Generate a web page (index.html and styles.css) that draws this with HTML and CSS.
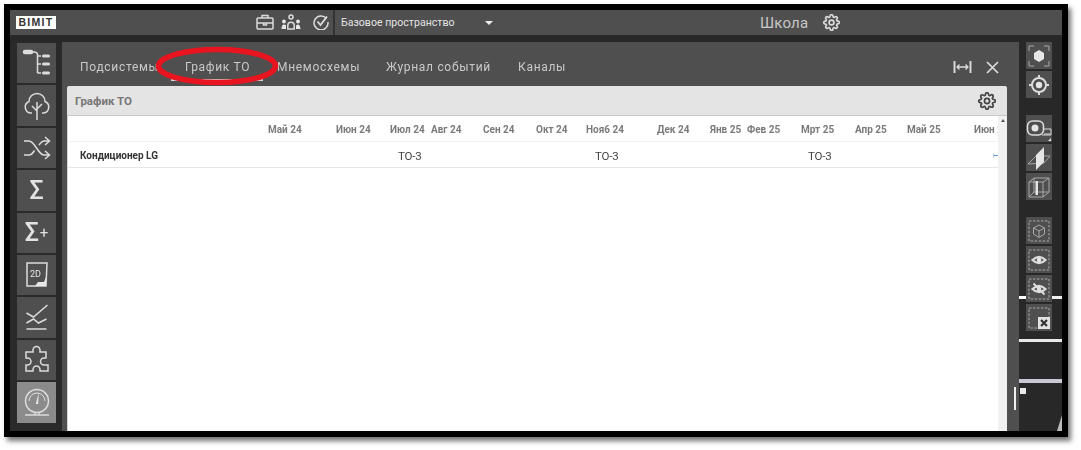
FILE: index.html
```html
<!DOCTYPE html>
<html lang="ru">
<head>
<meta charset="utf-8">
<title>График ТО</title>
<link rel="stylesheet" href="styles.css">
</head>
<body>
<svg class="defs" width="0" height="0" aria-hidden="true">
  <symbol id="gear" viewBox="0 0 24 24">
    <circle cx="12" cy="12" r="3.4"/>
    <path d="M19.4 15a1.65 1.65 0 0 0 .33 1.82l.06.06a2 2 0 0 1 0 2.83 2 2 0 0 1-2.83 0l-.06-.06a1.65 1.65 0 0 0-1.82-.33 1.65 1.65 0 0 0-1 1.51V21a2 2 0 0 1-2 2 2 2 0 0 1-2-2v-.09A1.65 1.65 0 0 0 9 19.4a1.65 1.65 0 0 0-1.82.33l-.06.06a2 2 0 0 1-2.83 0 2 2 0 0 1 0-2.83l.06-.06a1.65 1.65 0 0 0 .33-1.82 1.65 1.65 0 0 0-1.51-1H3a2 2 0 0 1-2-2 2 2 0 0 1 2-2h.09A1.65 1.65 0 0 0 4.6 9a1.65 1.65 0 0 0-.33-1.82l-.06-.06a2 2 0 0 1 0-2.83 2 2 0 0 1 2.83 0l.06.06a1.65 1.65 0 0 0 1.82.33H9a1.65 1.65 0 0 0 1-1.51V3a2 2 0 0 1 2-2 2 2 0 0 1 2 2v.09a1.65 1.65 0 0 0 1 1.51 1.65 1.65 0 0 0 1.82-.33l.06-.06a2 2 0 0 1 2.83 0 2 2 0 0 1 0 2.83l-.06.06a1.65 1.65 0 0 0-.33 1.82V9a1.65 1.65 0 0 0 1.51 1H21a2 2 0 0 1 2 2 2 2 0 0 1-2 2h-.09a1.65 1.65 0 0 0-1.51 1z"/>
  </symbol>
</svg>
<div class="frame">
  <header class="topbar">
    <div class="logo">BIMIT</div>
    <div class="top-icons">
      <svg class="ico" width="18" height="16" viewBox="0 0 18 16"><rect x="1" y="4" width="16" height="11" rx="1"/><path d="M6 4V1.500h6V4M1 9h16M7.500 9v2h3V9"/></svg>
      <svg class="ico" width="20" height="16" viewBox="0 0 20 16"><circle cx="10" cy="3" r="2"/><path d="M6.800 15v-3.500a3.200 3.200 0 0 1 6.400 0V15z"/><circle class="solid" cx="3" cy="7.500" r="1.900"/><circle class="solid" cx="17" cy="7.500" r="1.900"/><path class="solid" d="M.5 15q0-4.500 2.500-4.500t2 1.500v3zM15 15v-3q0-1.500 2-1.500t2.500 4.500z"/></svg>
      <svg class="ico ico-check" width="16" height="16" viewBox="0 0 16 16"><path d="M13.500 4.500A7 7 0 1 0 15 8"/><path d="M4.500 7.500 7.500 11 14 2.500" stroke-width="1.800"/></svg>
    </div>
    <div class="space">
      <span>Базовое пространство</span>
      <i class="caret"></i>
    </div>
    <div class="project">
      <span>Школа</span>
      <svg class="ico gear" width="17" height="17"><use href="#gear"/></svg>
    </div>
  </header>
  <div class="workspace">
    <nav class="rail">
      <button class="rbtn"><svg class="ico ico2" width="30" height="30" viewBox="0 0 30 30"><path d="M9 4h3c2.500 0 3.500 1 3.500 3v18M15.500 8H19M15.500 16H19M15.500 25H19"/><path class="pill" d="M3 4h6"/><path class="thick" d="M21.500 8h5M21.500 16h5M21.500 25h5"/></svg></button>
      <button class="rbtn"><svg class="ico ico2" width="30" height="30" viewBox="0 0 30 30"><path d="M10 22H8.500a6 6 0 0 1-1.500-11.500 8 8 0 0 1 16 0A6 6 0 0 1 21.500 22H20M15 29V11M15 20l-5-5M15 18l5-5"/></svg></button>
      <button class="rbtn"><svg class="ico ico2" width="30" height="30" viewBox="0 0 30 30"><path d="M2 8h5c6 0 9 14 15 14h5M2 22h5c2.500 0 4-2 5.500-4.500M17 12c1.500-2 3-4 5-4h5M23 4l4.500 4L23 12M23 18l4.500 4L23 26"/></svg></button>
      <button class="rbtn"><span class="sigma">Σ</span></button>
      <button class="rbtn"><span class="sigma">Σ<small>+</small></span></button>
      <button class="rbtn"><svg class="ico ico2" width="30" height="30" viewBox="0 0 30 30"><path d="M5 3h20l-1 23H5z"/><path class="solid" d="M13 26l3-4h6l2-5v9z"/><text x="8" y="17" class="ico-text">2D</text></svg></button>
      <button class="rbtn"><svg class="ico ico2" width="30" height="30" viewBox="0 0 30 30"><path d="M4.500 10l7 4 14-12M4.500 20l7-4 5 4 8-4M4.500 26h20"/></svg></button>
      <button class="rbtn"><svg class="ico ico2" width="30" height="30" viewBox="0 0 30 30"><path d="M11 7V5a3.500 3.500 0 0 1 7 0v2h6v6h-2a3.500 3.500 0 0 0 0 7h4v6h-8v-1.500a3.500 3.500 0 0 0-7 0V26H4v-6h1.500a3.500 3.500 0 0 0 0-7H4V7z"/></svg></button>
      <button class="rbtn active"><svg class="ico ico2" width="32" height="32" viewBox="0 0 32 32"><circle cx="16" cy="15" r="11.500"/><path class="thin" d="M8 15a8 8 0 0 1 16 0"/><path class="solid" d="M14.800 18l2.800-11-.400 11z"/><path d="M14 26.500v2M18 26.500v2M4 29h24"/></svg></button>
    </nav>

    <main class="panel">
      <div class="tabs">
        <a class="tab t1">Подсистемы</a>
        <a class="tab t2">График ТО</a>
        <a class="tab t3">Мнемосхемы</a>
        <a class="tab t4">Журнал событий</a>
        <a class="tab t5">Каналы</a>
        <div class="tab-tools">
          <svg class="ico" width="19" height="12" viewBox="0 0 19 12"><path d="M1.500 0v12M17.500 0v12" stroke-width="1.900"/><path stroke-width="1.300" d="M4 6h11M6.500 3.500 4 6l2.500 2.500M12.500 3.500 15 6l-2.500 2.500"/></svg>
          <svg class="ico close" width="13" height="13" viewBox="0 0 13 13"><path d="M1 1l11 11M12 1 1 12"/></svg>
        </div>
      </div>
      <div class="card-wrap">
        <section class="card">
          <div class="card-head">
            <span>График ТО</span>
            <svg class="ico gear gear-dark" width="18" height="18"><use href="#gear"/></svg>
          </div>
          <div class="card-body">
            <div class="table">
              <div class="gantt gantt-head">
                <span></span><span>Май 24</span><span>Июн 24</span><span>Июл 24</span><span>Авг 24</span><span>Сен 24</span><span>Окт 24</span><span>Ноя6 24</span><span>Дек 24</span><span>Янв 25</span><span>Фев 25</span><span>Мрт 25</span><span>Апр 25</span><span>Май 25</span><span>Июн 25</span>
              </div>
              <div class="gantt gantt-row">
                <b>Кондиционер LG</b><span></span><span></span><span class="to">ТО-3</span><span></span><span></span><span></span><span class="to to-b">ТО-3</span><span></span><span></span><span></span><span class="to to-c">ТО-3</span><span></span><span></span><span class="tick">⊢</span>
              </div>
            </div>
            <div class="scrollbar"><i class="up"></i></div>
          </div>
        </section>
        <div class="strip"></div>
      </div>
      <svg class="ring" width="124" height="40" viewBox="0 0 124 40"><ellipse cx="62" cy="20" rx="58.500" ry="16.500"/></svg>
    </main>

    <aside class="tools">
      <div class="group">
        <button class="tbtn"><svg class="ico" width="24" height="24" viewBox="0 0 24 24"><path class="faint" d="M2 7V2h5M17 2h5v5M22 17v5h-5M7 22H2v-5"/><path class="solid" d="M12 6l5 3v6l-5 3-5-3V9z"/></svg></button>
        <button class="tbtn"><svg class="ico" width="22" height="22" viewBox="0 0 22 22"><circle cx="11" cy="11" r="7" stroke-width="2"/><circle class="solid" cx="11" cy="11" r="3.200"/><path d="M11 1v3M11 18v3M1 11h3M18 11h3" stroke-width="2"/></svg></button>
      </div>
      <div class="group">
        <button class="tbtn"><svg class="ico" width="26" height="26" viewBox="0 0 26 26"><rect x="1.500" y="5" width="16" height="14" rx="5" stroke-width="1.600"/><circle class="solid" cx="9" cy="12" r="3.500"/><path d="M16 19h9v-6h-7M19 19v-2M21 19v-2M23 19v-2" class="thin"/><path class="solid" d="M25 22v3h-3z"/></svg></button>
        <button class="tbtn"><svg class="ico" width="26" height="26" viewBox="0 0 26 26"><path class="faint" d="M2 19l8-8h14l-6 7z"/><path class="solid" d="M18 2v15l-8 8V10z"/></svg></button>
        <button class="tbtn"><svg class="ico" width="24" height="24" viewBox="0 0 24 24"><path class="faint" d="M2 7h14v15H2zM2 7l5-4h15v14l-6 5M16 7l6-4M7 3v14M2 22l5-5h15"/><path class="solid" d="M8.500 6h2.500v14H8.500z"/></svg></button>
      </div>
      <div class="group">
        <button class="tbtn"><svg class="ico" width="24" height="24" viewBox="0 0 24 24"><rect class="dash" x="2" y="2" width="20" height="20"/><path class="faint" d="M12 6l5.500 3v6L12 18.500 6.500 15V9zM6.500 9l5.500 3 5.500-3M12 12v6.500"/></svg></button>
        <button class="tbtn"><svg class="ico" width="24" height="24" viewBox="0 0 24 24"><rect class="dash" x="2" y="2" width="20" height="20"/><path d="M5.500 12Q12 5.500 18.500 12 12 18.500 5.500 12z" stroke-width="2.200"/><circle class="solid" cx="12" cy="12" r="2.300"/></svg></button>
        <button class="tbtn"><svg class="ico" width="24" height="24" viewBox="0 0 24 24"><rect class="dash" x="2" y="2" width="20" height="20"/><path d="M5.500 12Q12 5.500 18.500 12 12 18.500 5.500 12z" stroke-width="2.200"/><circle class="solid" cx="12" cy="12" r="2.300"/><path d="M6.500 6.500l11 11" stroke-width="2"/></svg></button>
        <button class="tbtn"><svg class="ico" width="24" height="24" viewBox="0 0 24 24"><rect class="dash" x="2" y="2" width="20" height="20"/><rect class="box" x="11" y="11" width="12" height="12"/><path class="xmark" d="M14 14l6 6M20 14l-6 6"/></svg></button>
      </div>
      <i class="streak s1"></i><i class="streak s2"></i><i class="streak s3"></i><i class="streak s4"></i><i class="shard"></i>
    </aside>
  </div>
</div>
</body>
</html>
```
FILE: styles.css
```css
* { box-sizing: border-box; }
html, body { margin: 0; height: 100%; background: #fff; overflow: hidden; }
body { font-family: Roboto, "Liberation Sans", sans-serif; padding: 4px 0 0 4px; }
.defs { position: absolute; }

.frame {
  width: 1064px;
  height: 433px;
  border: 6px solid #000;
  background: #282828;
  box-shadow: 3px 4px 5px rgba(0, 0, 0, .55);
  display: flex;
  flex-direction: column;
  filter: blur(.35px);
}

.ico { fill: none; stroke: #dcdcdc; stroke-width: 1.5; display: block; flex: none; }
.ico .solid { fill: #e6e6e6; stroke: none; }
.ico .thin { stroke-width: 1; }
.ico .faint { stroke: #a8a8a8; stroke-width: 1; }
.ico .thick { stroke-width: 3; stroke-linecap: round; }
.ico .pill { stroke-width: 4.500; stroke-linecap: round; }
.ico .dash { stroke: #a8a8a8; stroke-width: 1; stroke-dasharray: 2.500 1.500; }
.ico .box { fill: #e2e2e2; stroke: none; }
.ico .xmark { stroke: #333; stroke-width: 2.200; }
.ico2 { stroke-width: 1.500; }
.ico-text { fill: #e6e6e6; stroke: none; font: 400 9px Roboto, sans-serif; }
.ico-check { margin-left: 5px; }
.gear { stroke-width: 2.300; }

.topbar {
  height: 25px;
  flex: none;
  background: #4f4f4f;
  display: flex;
  align-items: center;
  color: #ddd;
}
.logo {
  width: 40px;
  height: 13px;
  margin-left: 6px;
  background: #fff;
  color: #333;
  font: 700 10.500px/13px "Liberation Sans", sans-serif;
  letter-spacing: 1.300px;
  text-align: center;
}
.top-icons { display: flex; align-items: center; gap: 7px; margin-left: 200px; width: 77px; height: 100%; padding-bottom: 2px; }
.space {
  display: flex;
  align-items: center;
  height: 100%;
  width: 427px;
  padding-left: 6px;
  border-left: 2px solid #333;
  font-size: 10.600px;
  color: #e4e4e4;
}
.caret {
  margin-left: 30px;
  border: 4px solid transparent;
  border-top: 4px solid #eee;
  border-bottom: 0;
}
.project { display: flex; align-items: center; gap: 15px; font-size: 15px; color: #c8c8c8; letter-spacing: .2px; }

.workspace { flex: 1; min-height: 0; display: flex; margin-top: 7px; position: relative; }

.rail {
  width: 52px;
  flex: none;
  background: #2a2a2a;
  display: flex;
  flex-direction: column;
  gap: 2px;
  padding: 1px 6px 0 7px;
}
.rbtn {
  width: 39px;
  height: 40.400px;
  flex: none;
  padding: 0;
  border: 0;
  background: #4f4f4f;
  display: flex;
  align-items: center;
  justify-content: center;
}
.rbtn.active { background: #8b8b8b; }
.sigma { color: #e2e2e2; font: 500 25px/1 Roboto, sans-serif; }
.sigma small { font-size: 15px; font-weight: 400; vertical-align: 3px; margin-left: 1px; }

.panel {
  width: 957px;
  flex: none;
  background: #4f4f4f;
  display: flex;
  flex-direction: column;
  position: relative;
}
.tabs {
  height: 44px;
  flex: none;
  display: flex;
  align-items: center;
  position: relative;
  padding: 6px 0 0 18px;
  font-size: 12px;
  letter-spacing: .7px;
  color: #c9c9c9;
}
.tab { display: block; flex: none; }
.t1 { width: 105px; }
.t2 { width: 92px; position: relative; }
.t2::after {
  content: "";
  position: absolute;
  left: -14px;
  width: 92px;
  bottom: -7px;
  height: 2px;
  background: #d8d8d8;
}
.t3 { width: 109px; }
.t4 { width: 132px; }
.tab-tools { margin-left: auto; margin-right: 20px; display: flex; align-items: center; gap: 14px; }
.close { stroke-width: 1.700; }

.card-wrap { flex: 1; min-height: 0; display: flex; padding-left: 5px; }
.card {
  width: 940px;
  flex: none;
  display: flex;
  flex-direction: column;
  border-radius: 3px 3px 0 0;
  overflow: hidden;
  background: #fff;
}
.strip { flex: 1; position: relative; }
.strip::after {
  content: "";
  position: absolute;
  left: 7px;
  top: 301px;
  width: 1.500px;
  height: 23px;
  background: #eee;
}
.card-head {
  height: 30px;
  flex: none;
  background: #e4e4e4;
  border-bottom: 1px solid #c9c9c9;
  display: flex;
  align-items: center;
  justify-content: space-between;
  padding: 0 11px 0 8px;
  font-size: 11.500px;
  font-weight: 700;
  color: #777;
}
.gear-dark { stroke: #444; }

.card-body { flex: 1; min-height: 0; display: flex; }
.table { width: 931px; flex: none; overflow: hidden; border-left: 1px solid #d4d4d4; }
.scrollbar { flex: 1; background: #f1f1f1; padding-top: 3px; }
.up { display: block; margin: 0 auto; width: 0; border: 2.500px solid transparent; border-top: 0; border-bottom: 3px solid #555; }

.gantt {
  display: grid;
  grid-template-columns: 200px 68px 54px 41px 52px 53px 50px 71px 53px 37px 54px 54px 52px 67px 60px;
  align-items: center;
  white-space: nowrap;
  padding-top: 2px;
}
.gantt-head {
  height: 26px;
  font-size: 10px;
  font-weight: 700;
  color: #7b7b7b;
  border-bottom: 1px solid #f2f2f2;
}
.gantt-row {
  height: 26px;
  font-size: 11.500px;
  color: #444;
  border-bottom: 1px solid #e6e6e6;
}
.gantt-row b { font-size: 10px; color: #333; padding-left: 12px; }
.to { padding-left: 8px; letter-spacing: -.2px; }
.to-b { padding-left: 9px; }
.to-c { padding-left: 7px; }
.tick { padding-left: 19px; color: #5b8fc9; font-size: 6px; }

.tools {
  width: 43px;
  flex: none;
  display: flex;
  flex-direction: column;
  gap: 17px;
  padding-left: 7px;
  position: relative;
}
.group { display: flex; flex-direction: column; gap: 2px; position: relative; z-index: 1; }
.tbtn {
  width: 26px;
  height: 27px;
  padding: 0;
  border: 0;
  background: #4f4f4f;
  display: flex;
  align-items: center;
  justify-content: center;
}
.streak { position: absolute; left: 0; right: 0; background: #e8e8e8; }
.s1 { top: 254px; height: 3px; background: linear-gradient(90deg, #fff 16%, transparent 16%, transparent 77%, #eee 77%); }
.s2 { top: 297px; height: 3px; }
.s3 { top: 337px; height: 4px; background: #c9c9d6; }
.s4 { top: 346px; left: 1px; right: auto; width: 6px; height: 6px; }
.shard { position: absolute; right: 0; bottom: 0; border-bottom: 16px solid #bbb; border-left: 5px solid transparent; }

.ring {
  position: absolute;
  left: 93px;
  top: 4px;
  fill: none;
  stroke: #e8141f;
  stroke-width: 5.500px;
}
```
